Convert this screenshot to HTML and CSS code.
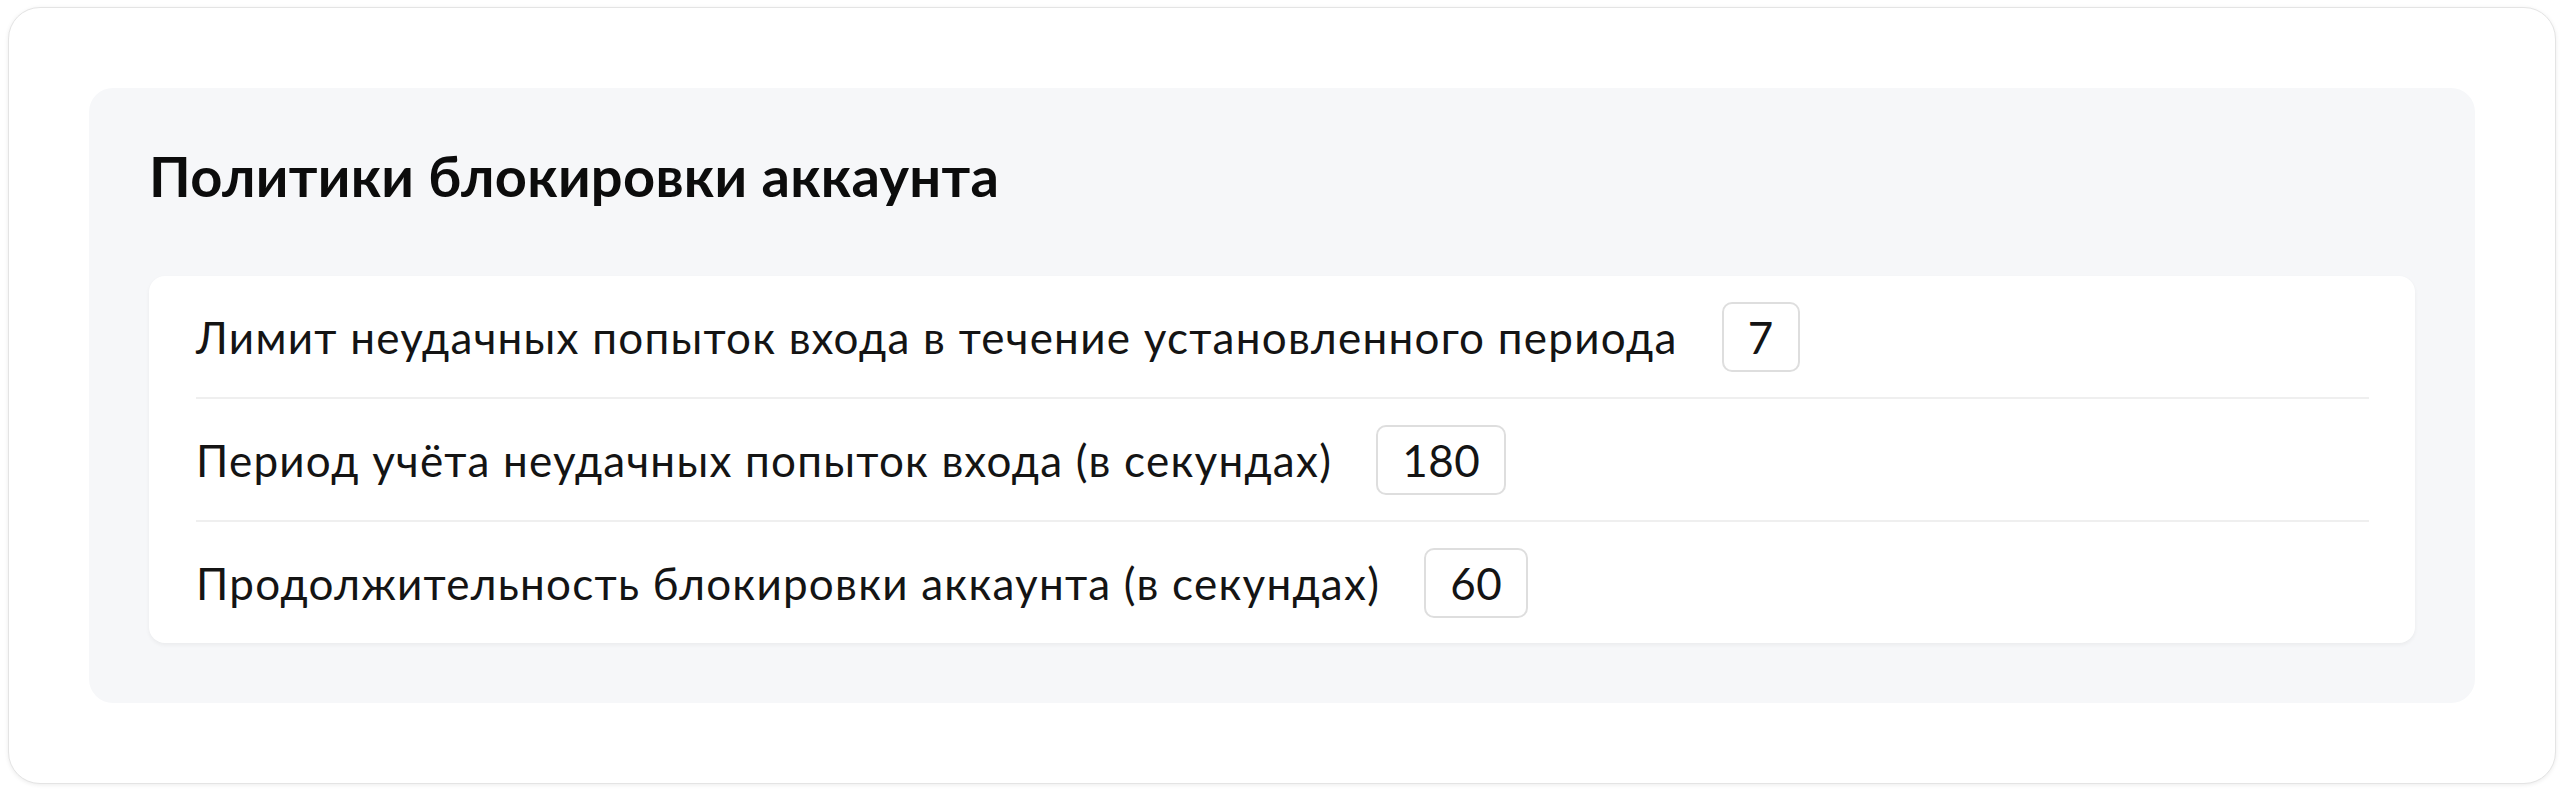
FILE: index.html
```html
<!DOCTYPE html>
<html lang="ru">
<head>
    <meta charset="UTF-8">
    <meta name="viewport" content="width=device-width, initial-scale=1.0">
    <title>Политики блокировки аккаунта</title>
    <link rel="stylesheet" href="styles.css">
</head>
<body>
    <div class="page-card">
        <section class="policy-panel">
            <h2>Политики блокировки аккаунта</h2>

            <div class="policy-list">
                <div class="policy-row">
                    <span class="policy-label">Лимит неудачных попыток входа в течение установленного периода</span>
                    <span class="policy-value">7</span>
                </div>
                <div class="policy-row">
                    <span class="policy-label">Период учёта неудачных попыток входа (в секундах)</span>
                    <span class="policy-value">180</span>
                </div>
                <div class="policy-row">
                    <span class="policy-label">Продолжительность блокировки аккаунта (в секундах)</span>
                    <span class="policy-value">60</span>
                </div>
            </div>
        </section>
    </div>
</body>
</html>
```

FILE: styles.css
```css
html, body {
    height: 100%;
}
body {
    margin: 0;
    padding: 7px 8px 8px;
    box-sizing: border-box;
    background-color: #ffffff;
    font-family: Lato, "Open Sans", Arial, sans-serif;
    color: #111111;
}
.page-card {
    height: 100%;
    box-sizing: border-box;
    padding: 80px;
    background: white;
    border: 1px solid #e4e4e4;
    border-radius: 32px;
    box-shadow: 0 1px 4px rgba(0,0,0,0.08);
}
.policy-panel {
    background-color: #f6f7f9;
    border-radius: 24px;
    padding: 60px;
}
h2 {
    margin: 0 0 72px;
    font-size: 56px;
    line-height: 1;
    font-weight: bold;
    letter-spacing: 0.3px;
    color: #0c0c0c;
}
.policy-list {
    background: white;
    border-radius: 16px;
    padding: 0 46px 0 47px;
    box-shadow: 0 2px 4px rgba(0,0,0,0.05);
}
.policy-row {
    display: flex;
    align-items: center;
    gap: 44px;
    height: 121px;
    border-bottom: 2px solid #efefef;
}
.policy-row:last-child {
    border-bottom: none;
}
.policy-label {
    font-size: 44px;
    letter-spacing: 1.25px;
    color: #141414;
}
.policy-value {
    display: inline-block;
    min-width: 22px;
    padding: 0 24px;
    height: 66px;
    line-height: 66px;
    border: 2px solid #dedede;
    border-radius: 10px;
    font-size: 44px;
    letter-spacing: 0.5px;
    text-align: center;
    color: #141414;
}
```
